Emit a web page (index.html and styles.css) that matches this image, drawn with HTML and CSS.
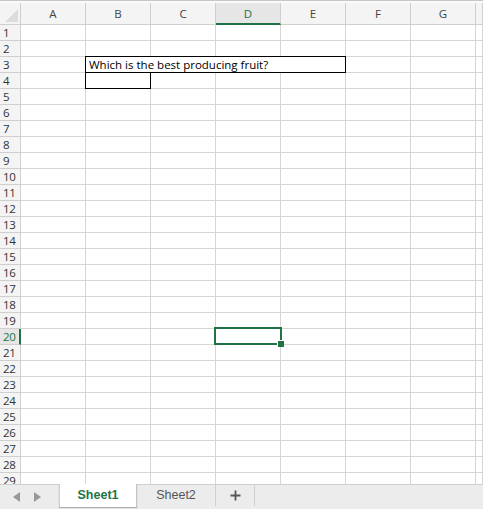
FILE: index.html
```html
<!DOCTYPE html>
<html>
<head>
<meta charset="utf-8">
<link rel="stylesheet" href="styles.css">
</head>
<body>
<div class="app">
  <div class="topline"></div>
  <div class="sheet">
    <div class="grid" id="grid"></div>
    <div class="selection"><span class="handle"></span></div>
  </div>
  <div class="tabbar">
    <div class="navs">
      <span class="tri left"></span>
      <span class="tri right"></span>
    </div>
    <div class="tab active">Sheet1</div>
    <div class="tab">Sheet2</div>
    <div class="tab add">
      <svg width="11" height="11" viewBox="0 0 11 11"><path d="M5.5 0.5v10M0.5 5.5h10" stroke="#555" stroke-width="1.8" fill="none"/></svg>
    </div>
  </div>
</div>
<script>
  var g = document.getElementById('grid');
  var cols = ['A','B','C','D','E','F','G',''];
  var h = '<div class="corner"><span class="corner-tri"></span></div>';
  cols.forEach(function(c){ h += '<div class="colhead' + (c==='D'?' sel':'') + '">' + c + '</div>'; });
  for (var r = 1; r <= 29; r++) {
    h += '<div class="rowhead' + (r===20?' sel':'') + '">' + r + '</div>';
    for (var i = 0; i < 8; i++) {
      if (r === 3 && i === 1) { h += '<div class="cell text boxed wide">Which is the best producing fruit?</div>'; i += 3; continue; }
      if (r === 4 && i === 1) { h += '<div class="cell boxed"></div>'; continue; }
      h += '<div class="cell"></div>';
    }
  }
  g.innerHTML = h;
</script>
</body>
</html>
```

FILE: styles.css
```css
* { box-sizing: border-box; }
html, body { margin: 0; padding: 0; background: #fff; }
.app {
  width: 483px;
  height: 509px;
  display: flex;
  flex-direction: column;
  overflow: hidden;
  font-family: "Open Sans", "Lato", sans-serif;
}
.topline {
  height: 3px;
  border-top: 1px solid #c6c6c6;
  background: #fafafa;
  flex: none;
}
.sheet {
  position: relative;
  height: 481px;
  flex: none;
  overflow: hidden;
}
.grid {
  display: grid;
  grid-template-columns: 21px repeat(7, 65px) 1fr;
  grid-auto-rows: 16px;
  grid-template-rows: 22px;
}
.corner, .colhead, .rowhead, .cell {
  border-right: 1px solid #d6d6d6;
  border-bottom: 1px solid #d6d6d6;
}
.corner {
  background: #f4f4f4;
  position: relative;
  border-color: #cfcfcf;
}
.corner-tri {
  position: absolute;
  right: 2px;
  bottom: 2px;
  width: 0;
  height: 0;
  border-left: 13px solid transparent;
  border-bottom: 13px solid #dcdcdc;
}
.colhead {
  background: #f4f4f4;
  border-color: #cfcfcf;
  color: #444;
  font-size: 11.5px;
  display: flex;
  align-items: center;
  justify-content: center;
}
.colhead.sel {
  background: #e6e6e6;
  color: #217346;
  border-bottom: 2px solid #217346;
  padding-top: 1px;
}
.rowhead {
  background: #f4f4f4;
  border-color: #cfcfcf;
  color: #333;
  font-size: 11.5px;
  letter-spacing: -0.3px;
  display: flex;
  align-items: center;
  padding-left: 3px;
}
.rowhead.sel {
  background: #e6e6e6;
  color: #217346;
  border-right: 2px solid #217346;
}
.cell { background: #fff; }
.cell.wide { grid-column: span 4; }
.cell.text {
  font-size: 11.5px;
  color: #000;
  padding-left: 3px;
  line-height: 15px;
  white-space: nowrap;
}
.boxed { position: relative; }
.boxed::after {
  content: "";
  position: absolute;
  left: -1px;
  top: -1px;
  right: -1px;
  bottom: -1px;
  border: 1px solid #000;
}
.selection {
  position: absolute;
  left: 214px;
  top: 324px;
  width: 68px;
  height: 18px;
  border: 2px solid #217346;
}
.handle {
  position: absolute;
  right: -4px;
  bottom: -4px;
  width: 6px;
  height: 6px;
  background: #217346;
  border-left: 1px solid #fff;
  border-top: 1px solid #fff;
  box-sizing: content-box;
}
.tabbar {
  flex: 1;
  display: flex;
  align-items: stretch;
  background: #ececec;
  border-top: 1px solid #cfcfcf;
  font-family: "Liberation Sans", Arial, sans-serif;
}
.navs {
  width: 59px;
  display: flex;
  align-items: center;
  gap: 14px;
  padding-left: 13px;
}
.tri { width: 0; height: 0; border-top: 5.5px solid transparent; border-bottom: 5.5px solid transparent; }
.tri.left { border-right: 7px solid #999; }
.tri.right { border-left: 7px solid #999; }
.tab {
  width: 79px;
  display: flex;
  align-items: center;
  justify-content: center;
  font-size: 12.5px;
  color: #555;
  border-right: 1px solid #d0d0d0;
  margin-bottom: 3px;
  padding-bottom: 1px;
}
.tab.active {
  width: 78px;
  background: #fff;
  color: #217346;
  font-weight: bold;
  margin-top: -1px;
  margin-bottom: 2px;
  border-left: 1px solid #d0d0d0;
  border-right: 1px solid #c4c4c4;
  box-shadow: 0 1px 1px rgba(0,0,0,0.25);
}
.tab.add { width: 39px; }
```
